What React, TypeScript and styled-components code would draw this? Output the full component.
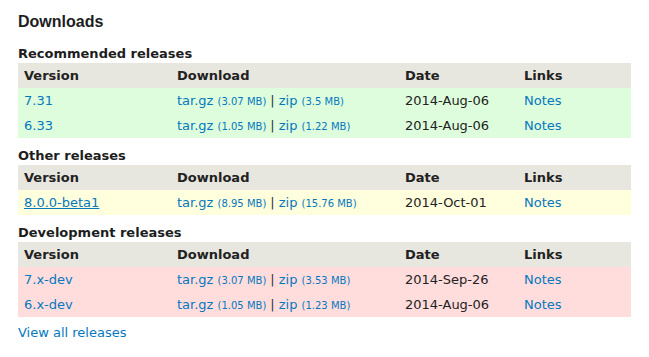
import React, { FunctionComponent } from "react";
import styled, { createGlobalStyle } from "styled-components";

type Tone = "green" | "yellow" | "red";

interface Release {
  version: string;
  tar: string;
  zip: string;
  date: string;
  underline?: boolean;
}

interface ReleaseGroup {
  title: string;
  tone: Tone;
  releases: Release[];
}

const groups: ReleaseGroup[] = [
  {
    title: "Recommended releases",
    tone: "green",
    releases: [
      { version: "7.31", tar: "3.07 MB", zip: "3.5 MB", date: "2014-Aug-06" },
      { version: "6.33", tar: "1.05 MB", zip: "1.22 MB", date: "2014-Aug-06" }
    ]
  },
  {
    title: "Other releases",
    tone: "yellow",
    releases: [
      {
        version: "8.0.0-beta1",
        tar: "8.95 MB",
        zip: "15.76 MB",
        date: "2014-Oct-01",
        underline: true
      }
    ]
  },
  {
    title: "Development releases",
    tone: "red",
    releases: [
      { version: "7.x-dev", tar: "3.07 MB", zip: "3.53 MB", date: "2014-Sep-26" },
      { version: "6.x-dev", tar: "1.05 MB", zip: "1.23 MB", date: "2014-Aug-06" }
    ]
  }
];

const toneColors: { [key in Tone]: string } = {
  green: "#ddfddd",
  yellow: "#fffedd",
  red: "#ffdddd"
};

const App: FunctionComponent = () => {
  return (
    <Page>
      <GlobalStyle />
      <Title>Downloads</Title>
      {groups.map(group => (
        <Section key={group.title}>
          <SectionTitle>{group.title}</SectionTitle>
          <ReleaseTable>
            <colgroup>
              <col style={{ width: 153 }} />
              <col style={{ width: 228 }} />
              <col style={{ width: 119 }} />
              <col />
            </colgroup>
            <thead>
              <tr>
                <HeadCell>Version</HeadCell>
                <HeadCell>Download</HeadCell>
                <HeadCell>Date</HeadCell>
                <HeadCell>Links</HeadCell>
              </tr>
            </thead>
            <tbody>
              {group.releases.map(release => (
                <ReleaseRow tone={group.tone} key={release.version}>
                  <Cell>
                    <Link href="#" $underline={release.underline}>
                      {release.version}
                    </Link>
                  </Cell>
                  <Cell>
                    <Link href="#">
                      tar.gz <FileSize>({release.tar})</FileSize>
                    </Link>
                    <Separator>|</Separator>
                    <Link href="#">
                      zip <FileSize>({release.zip})</FileSize>
                    </Link>
                  </Cell>
                  <Cell>{release.date}</Cell>
                  <Cell>
                    <Link href="#">Notes</Link>
                  </Cell>
                </ReleaseRow>
              ))}
            </tbody>
          </ReleaseTable>
        </Section>
      ))}
      <AllReleases href="#">View all releases</AllReleases>
    </Page>
  );
};

export default App;

const GlobalStyle = createGlobalStyle`
  body {
    margin: 0;
    background: #fff;
    font-family: "DejaVu Sans", Verdana, sans-serif;
    color: #222;
  }
`;

const Page = styled.div`
  padding: 11px 18px 12px;
`;

const Title = styled.h2`
  margin: 0 0 12px;
  font-family: "Liberation Sans", Arial, sans-serif;
  font-size: 16px;
  line-height: 21px;
  font-weight: bold;
  color: #1d1d1d;
`;

const Section = styled.section`
  & + & {
    margin-top: 8px;
  }
`;

const SectionTitle = styled.h3`
  margin: 0;
  font-size: 13px;
  line-height: 19px;
  font-weight: bold;
  color: #1d1d1d;
`;

const ReleaseTable = styled.table`
  width: 100%;
  border-collapse: collapse;
  table-layout: fixed;
  font-size: 13px;
`;

const HeadCell = styled.th`
  height: 25px;
  padding: 0 6px;
  text-align: left;
  background-color: #e8e7df;
  font-weight: bold;
  color: #222;
`;

const ReleaseRow = styled.tr<{ tone: Tone }>`
  background-color: ${props => toneColors[props.tone]};
`;

const Cell = styled.td`
  height: 25px;
  padding: 0 6px;
  white-space: nowrap;
  color: #222;
`;

const Link = styled.a<{ $underline?: boolean }>`
  color: #0678be;
  text-decoration: ${props => (props.$underline ? "underline" : "none")};
`;

const FileSize = styled.span`
  font-size: 10px;
`;

const Separator = styled.span`
  margin: 0 4px;
  color: #333;
`;

const AllReleases = styled.a`
  display: block;
  margin-top: 6px;
  font-size: 13px;
  line-height: 19px;
  color: #0678be;
  text-decoration: none;
`;
